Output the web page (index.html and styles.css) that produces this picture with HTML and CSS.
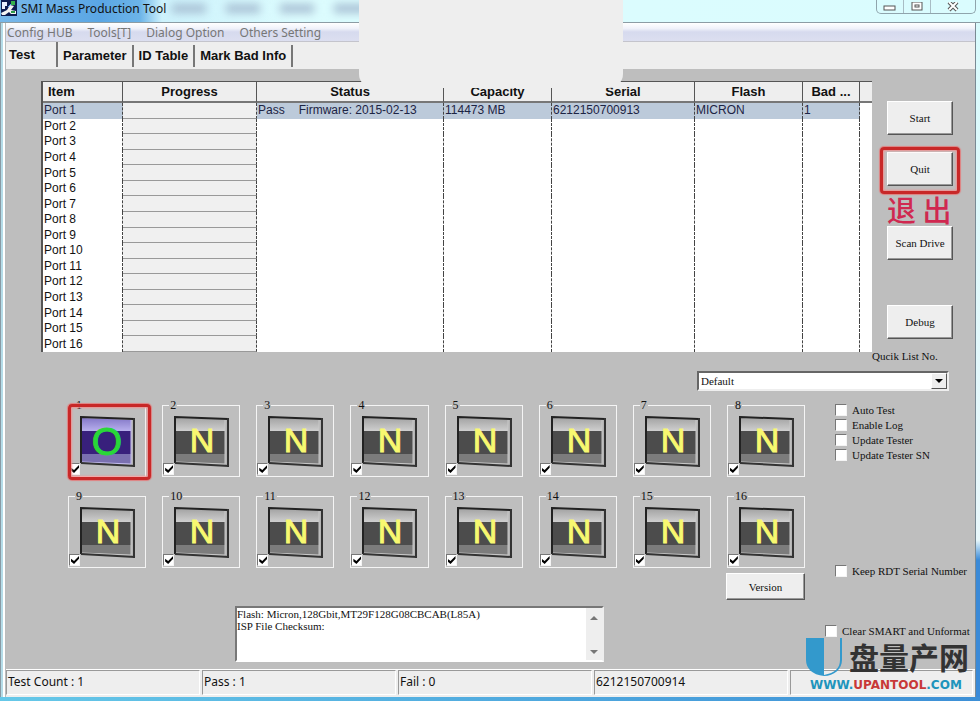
FILE: index.html
```html
<!DOCTYPE html>
<html lang="en">
<head>
  <meta charset="UTF-8">
  <title>SMI Mass Production Tool</title>
  <link rel="stylesheet" href="styles.css">
</head>
<body>

  <!-- shared drawings -->
  <svg class="defs" width="0" height="0" aria-hidden="true">
    <defs>
      <linearGradient id="shine" x1="0" y1="0" x2="0" y2="1">
        <stop offset="0" stop-color="#a4a4a4"/>
        <stop offset="1" stop-color="#d2d2d2"/>
      </linearGradient>
      <linearGradient id="shine-on" x1="0" y1="0" x2="0" y2="1">
        <stop offset="0" stop-color="#8478c8"/>
        <stop offset="1" stop-color="#bcb4f0"/>
      </linearGradient>
      <symbol id="chip" viewBox="0 0 56 52">
        <path d="M1 1 L55 3 L55 50 L1 47 Z" fill="#b4b4b4"/>
        <path d="M2 2 L51 4 L51 16 L2 16 Z" fill="url(#shine)"/>
        <path d="M2 15 H51 V38 H2 Z" fill="#4c4c4c"/>
        <path d="M2 38 H51 V48 L2 46 Z" fill="#7c7c7c"/>
        <path d="M51 4 V48 L2 46" fill="none" stroke="#c8c8c8"/>
        <path d="M1 47 V1 L54 3" fill="none" stroke="#222" stroke-width="2"/>
        <path d="M54 2 V51" stroke="#333" stroke-width="2"/>
        <path d="M1 47 L55 50" stroke="#333" stroke-width="2"/>
      </symbol>
      <symbol id="chip-on" viewBox="0 0 56 52">
        <path d="M1 1 L55 3 L55 50 L1 47 Z" fill="#b4b4b4"/>
        <path d="M2 2 L51 4 L51 16 L2 16 Z" fill="url(#shine-on)"/>
        <path d="M2 15 H51 V38 H2 Z" fill="#38207c"/>
        <path d="M2 38 H51 V48 L2 46 Z" fill="#7a70b0"/>
        <path d="M51 4 V48 L2 46" fill="none" stroke="#c4bcf0"/>
        <path d="M1 47 V1 L54 3" fill="none" stroke="#222" stroke-width="2"/>
        <path d="M54 2 V51" stroke="#333" stroke-width="2"/>
        <path d="M1 47 L55 50" stroke="#333" stroke-width="2"/>
      </symbol>
    </defs>
  </svg>

  <div class="window">
    <header class="titlebar">
      <svg class="app-icon" width="16" height="16" viewBox="0 0 16 16">
        <rect width="16" height="16" fill="#0c1c50"/>
        <path d="M1 2h5v4H4v3H1z" fill="#e8f0ff"/>
        <path d="M10 1h4v4h-4z" fill="#35b04c"/>
        <path d="M0 13l6-3 3-5 4 1-3 4 5 1v3h-5l-2-2-4 3H1z" fill="#f4f4f4"/>
        <path d="M10 11h4v2h-4z" fill="#2f9a48"/>
        <path d="M7 7l3-3" stroke="#59a4ff" stroke-width="1"/>
      </svg>
      <h1>SMI Mass Production Tool</h1>
      <div class="ghosts"><i></i><i></i><i></i><i></i></div>
      <div class="win-buttons">
        <button type="button" aria-label="Minimize">
          <svg width="14" height="10" viewBox="0 0 14 10"><rect x="1" y="4" width="11" height="4" fill="#fff" stroke="#555"/></svg>
        </button>
        <button type="button" aria-label="Maximize">
          <svg width="12" height="10" viewBox="0 0 12 10"><rect x="1" y="0" width="10" height="8" fill="#fff" stroke="#555"/><rect x="4" y="3" width="4" height="2" fill="none" stroke="#555"/></svg>
        </button>
        <button type="button" aria-label="Close">
          <svg width="12" height="10" viewBox="0 0 12 10"><path d="M2 0L10 8M10 0L2 8" stroke="#555" stroke-width="4"/><path d="M2 0L10 8M10 0L2 8" stroke="#fff" stroke-width="2"/></svg>
        </button>
      </div>
    </header>

    <nav class="menubar">
      <a href="#">Config HUB</a>
      <a href="#">Tools[T]</a>
      <a href="#">Dialog Option</a>
      <a href="#">Others Setting</a>
    </nav>

    <div class="tabs">
      <button type="button" class="tab active">Test</button>
      <button type="button" class="tab">Parameter</button>
      <button type="button" class="tab">ID Table</button>
      <button type="button" class="tab">Mark Bad Info</button>
    </div>

    <main class="panel">
      <section class="top">
        <div class="list">
          <table>
            <colgroup>
              <col class="c-item"><col class="c-progress"><col class="c-status"><col class="c-capacity"><col class="c-serial"><col class="c-flash"><col class="c-bad"><col>
            </colgroup>
            <thead>
              <tr><th>Item</th><th>Progress</th><th>Status</th><th>Capacity</th><th>Serial</th><th>Flash</th><th>Bad ...</th><th></th></tr>
            </thead>
            <tbody>
              <tr class="selected"><td>Port 1</td><td></td><td><span class="pass">Pass</span>Firmware: 2015-02-13</td><td>114473 MB</td><td>6212150700913</td><td>MICRON</td><td>1</td><td></td></tr>
              <tr><td>Port 2</td><td></td><td></td><td></td><td></td><td></td><td></td><td></td></tr>
              <tr><td>Port 3</td><td></td><td></td><td></td><td></td><td></td><td></td><td></td></tr>
              <tr><td>Port 4</td><td></td><td></td><td></td><td></td><td></td><td></td><td></td></tr>
              <tr><td>Port 5</td><td></td><td></td><td></td><td></td><td></td><td></td><td></td></tr>
              <tr><td>Port 6</td><td></td><td></td><td></td><td></td><td></td><td></td><td></td></tr>
              <tr><td>Port 7</td><td></td><td></td><td></td><td></td><td></td><td></td><td></td></tr>
              <tr><td>Port 8</td><td></td><td></td><td></td><td></td><td></td><td></td><td></td></tr>
              <tr><td>Port 9</td><td></td><td></td><td></td><td></td><td></td><td></td><td></td></tr>
              <tr><td>Port 10</td><td></td><td></td><td></td><td></td><td></td><td></td><td></td></tr>
              <tr><td>Port 11</td><td></td><td></td><td></td><td></td><td></td><td></td><td></td></tr>
              <tr><td>Port 12</td><td></td><td></td><td></td><td></td><td></td><td></td><td></td></tr>
              <tr><td>Port 13</td><td></td><td></td><td></td><td></td><td></td><td></td><td></td></tr>
              <tr><td>Port 14</td><td></td><td></td><td></td><td></td><td></td><td></td><td></td></tr>
              <tr><td>Port 15</td><td></td><td></td><td></td><td></td><td></td><td></td><td></td></tr>
              <tr><td>Port 16</td><td></td><td></td><td></td><td></td><td></td><td></td><td></td></tr>
            </tbody>
          </table>
        </div>
        <div class="actions">
          <button type="button" class="btn start">Start</button>
          <div class="marked">
            <button type="button" class="btn">Quit</button>
            <span class="mark"></span>
          </div>
          <span class="note" lang="zh">退 出</span>
          <button type="button" class="btn scan">Scan Drive</button>
          <button type="button" class="btn">Debug</button>
          <label class="quick-label" for="quick">Qucik List No.</label>
        </div>
      </section>

      <div class="quick">
        <select id="quick"><option>Default</option></select>
        <span class="drop"></span>
      </div>

      <section class="bottom">
        <div class="left">
          <div class="slots">
            <fieldset class="slot marked"><legend>1</legend><input type="checkbox" aria-label="Port 1" checked><svg class="chip" viewBox="0 0 56 52"><use href="#chip-on"/><text class="letter ok" x="27" y="39">O</text></svg><span class="mark"></span></fieldset>
            <fieldset class="slot"><legend>2</legend><input type="checkbox" aria-label="Port 2" checked><svg class="chip" viewBox="0 0 56 52"><use href="#chip"/><text class="letter" x="28" y="36">N</text></svg></fieldset>
            <fieldset class="slot"><legend>3</legend><input type="checkbox" aria-label="Port 3" checked><svg class="chip" viewBox="0 0 56 52"><use href="#chip"/><text class="letter" x="28" y="36">N</text></svg></fieldset>
            <fieldset class="slot"><legend>4</legend><input type="checkbox" aria-label="Port 4" checked><svg class="chip" viewBox="0 0 56 52"><use href="#chip"/><text class="letter" x="28" y="36">N</text></svg></fieldset>
            <fieldset class="slot"><legend>5</legend><input type="checkbox" aria-label="Port 5" checked><svg class="chip" viewBox="0 0 56 52"><use href="#chip"/><text class="letter" x="28" y="36">N</text></svg></fieldset>
            <fieldset class="slot"><legend>6</legend><input type="checkbox" aria-label="Port 6" checked><svg class="chip" viewBox="0 0 56 52"><use href="#chip"/><text class="letter" x="28" y="36">N</text></svg></fieldset>
            <fieldset class="slot"><legend>7</legend><input type="checkbox" aria-label="Port 7" checked><svg class="chip" viewBox="0 0 56 52"><use href="#chip"/><text class="letter" x="28" y="36">N</text></svg></fieldset>
            <fieldset class="slot"><legend>8</legend><input type="checkbox" aria-label="Port 8" checked><svg class="chip" viewBox="0 0 56 52"><use href="#chip"/><text class="letter" x="28" y="36">N</text></svg></fieldset>
            <fieldset class="slot"><legend>9</legend><input type="checkbox" aria-label="Port 9" checked><svg class="chip" viewBox="0 0 56 52"><use href="#chip"/><text class="letter" x="28" y="36">N</text></svg></fieldset>
            <fieldset class="slot"><legend>10</legend><input type="checkbox" aria-label="Port 10" checked><svg class="chip" viewBox="0 0 56 52"><use href="#chip"/><text class="letter" x="28" y="36">N</text></svg></fieldset>
            <fieldset class="slot"><legend>11</legend><input type="checkbox" aria-label="Port 11" checked><svg class="chip" viewBox="0 0 56 52"><use href="#chip"/><text class="letter" x="28" y="36">N</text></svg></fieldset>
            <fieldset class="slot"><legend>12</legend><input type="checkbox" aria-label="Port 12" checked><svg class="chip" viewBox="0 0 56 52"><use href="#chip"/><text class="letter" x="28" y="36">N</text></svg></fieldset>
            <fieldset class="slot"><legend>13</legend><input type="checkbox" aria-label="Port 13" checked><svg class="chip" viewBox="0 0 56 52"><use href="#chip"/><text class="letter" x="28" y="36">N</text></svg></fieldset>
            <fieldset class="slot"><legend>14</legend><input type="checkbox" aria-label="Port 14" checked><svg class="chip" viewBox="0 0 56 52"><use href="#chip"/><text class="letter" x="28" y="36">N</text></svg></fieldset>
            <fieldset class="slot"><legend>15</legend><input type="checkbox" aria-label="Port 15" checked><svg class="chip" viewBox="0 0 56 52"><use href="#chip"/><text class="letter" x="28" y="36">N</text></svg></fieldset>
            <fieldset class="slot"><legend>16</legend><input type="checkbox" aria-label="Port 16" checked><svg class="chip" viewBox="0 0 56 52"><use href="#chip"/><text class="letter" x="28" y="36">N</text></svg></fieldset>
          </div>
          <button type="button" class="btn version">Version</button>
          <div class="log">
            <textarea readonly aria-label="Log">Flash: Micron,128Gbit,MT29F128G08CBCAB(L85A)
ISP File Checksum:</textarea>
            <div class="scroll">
              <svg width="8" height="4" viewBox="0 0 8 4"><path d="M0 4L4 0L8 4z" fill="#777"/></svg>
              <svg width="8" height="4" viewBox="0 0 8 4"><path d="M0 0L4 4L8 0z" fill="#777"/></svg>
            </div>
          </div>
        </div>

        <div class="options">
          <label><input type="checkbox">Auto Test</label>
          <label><input type="checkbox">Enable Log</label>
          <label><input type="checkbox">Update Tester</label>
          <label><input type="checkbox">Update Tester SN</label>
          <label class="keep"><input type="checkbox">Keep RDT Serial Number</label>
          <label class="clear"><input type="checkbox">Clear SMART and Unformat</label>
        </div>
      </section>
    </main>

    <footer class="status">
      <span>Test Count : 1</span>
      <span>Pass : 1</span>
      <span>Fail : 0</span>
      <span>6212150700914</span>
      <span></span>
    </footer>

    <div class="blank"></div>

    <div class="brand">
      <svg width="38" height="39" viewBox="0 0 38 39">
        <path d="M0 0H18V38C6 37 0 30 0 22Z" fill="#3399cc"/>
        <path d="M18 37C29 35 34 30 34 22V0H36V22C36 31 28 38 18 38Z" fill="#3399cc"/>
      </svg>
      <span class="brand-name" lang="zh">盘量产网</span>
      <span class="brand-url">WWW.<b>UPANTOOL</b>.COM</span>
    </div>
  </div>

</body>
</html>
```
FILE: styles.css
```css
* {
  box-sizing: border-box;
}

body {
  margin: 0;
  min-height: 100vh;
  display: flex;
  background: linear-gradient(to bottom, #d8fbfd 0, #e8f8fc 540px, #3a8ad8 560px, #3a8ad8 100%);
  font-family: "Liberation Serif", "Noto Sans CJK SC", serif;
  font-size: 11px;
  color: #111;
}

button,
select,
textarea {
  font: inherit;
  color: inherit;
}

.defs {
  position: absolute;
}

.window {
  position: relative;
  flex: 1;
  min-width: 0;
  display: flex;
  flex-direction: column;
  padding: 0 5px 6px 6px;
  background:
    linear-gradient(to right, #66c8e8, #3d8fd6) bottom / 100% 4px no-repeat,
    linear-gradient(to right, #8a9aa4 0 1px, #b4dce8 1px 3px, #fff 3px 5px, #bbb 5px) left / 6px 100% no-repeat,
    linear-gradient(to left, transparent 0 4px, #7a8a94 4px) right / 5px 100% no-repeat,
    linear-gradient(#eee, #eee) left / calc(100% - 5px) 100% no-repeat;
}

/* title bar */
.titlebar {
  display: flex;
  align-items: flex-start;
  height: 23px;
  margin: 0 -5px 0 -6px;
  border-bottom: 1px solid #8c9ca4;
  background: linear-gradient(to right, #78b8ea 0, #5aa6e4 100px, #6cb4e8 140px, #cdf2fc 162px, #dcfcfe 300px, #dafcfe 100%);
}

.app-icon {
  margin: 0 4px 0 1px;
}

h1 {
  margin: 0;
  font: 12px/17px "Noto Sans", sans-serif;
}

.ghosts {
  flex: 1;
  display: flex;
  gap: 20px;
  padding: 4px 0 0 6px;
}

.ghosts i {
  width: 34px;
  height: 9px;
  background: #a8c0d4;
  filter: blur(4px);
}

.win-buttons {
  display: flex;
  height: 14px;
  margin-right: 4px;
  border: 1px solid #8fa4ac;
  border-top: 0;
  border-radius: 0 0 5px 5px;
}

.win-buttons button {
  width: 27px;
  padding: 0;
  border: 0;
  border-right: 1px solid #a8bcc4;
  background: none;
  line-height: 0;
}

.win-buttons button:last-child {
  width: 44px;
  border-right: 0;
}

/* menu and tabs */
.menubar {
  display: flex;
  gap: 15px;
  height: 19px;
  padding-left: 1px;
  border-bottom: 1px solid #c4c4cc;
  background: linear-gradient(#fff 0, #f0f2fa 30%, #d6daee 50%, #dcdff0 100%);
  font: 12px/19px "Noto Sans", sans-serif;
}

.menubar a {
  color: #777;
  text-decoration: none;
}

.tabs {
  display: flex;
  align-items: flex-start;
  height: 27px;
  background: #eee;
}

.tab {
  height: 22px;
  margin-top: 3px;
  padding: 0 5px;
  border: 0;
  border-right: 2px solid #777;
  background: none;
  font: bold 13px/20px "Liberation Sans", sans-serif;
}

.tab.active {
  width: 52px;
  margin-top: 0;
  padding: 0 3px;
  height: 25px;
  text-align: left;
}

/* main panel */
.panel {
  flex: 1;
  padding: 12px 0 6px 35px;
  background: #bebebe;
}

.top {
  display: flex;
  align-items: flex-start;
}

.list {
  flex: 1;
  min-width: 0;
  border: 1px solid #555;
  border-width: 1px 0 0 2px;
  background: #fff;
}

.list table {
  width: 100%;
  height: 270px;
  table-layout: fixed;
  border-collapse: separate;
  border-spacing: 0;
  font: 12px/15px "Liberation Sans", sans-serif;
}

.c-item { width: 80px; }
.c-progress { width: 134px; }
.c-status { width: 187px; }
.c-capacity { width: 108px; }
.c-serial { width: 143px; }
.c-flash { width: 108px; }
.c-bad { width: 57px; }

.list th {
  height: 21px;
  padding: 0;
  border-right: 1px solid #555;
  border-bottom: 2px solid #777;
  background: #eee;
  font-size: 13px;
}

.list th:first-child {
  padding-left: 5px;
  text-align: left;
}

.list th:last-child {
  border-right: 0;
}

.list td {
  padding: 0 1px;
  border-right: 1px dashed #444;
  white-space: nowrap;
  overflow: hidden;
}

.list td:last-child {
  border-right: 0;
}

.list td:nth-child(2) {
  border-bottom: 1px solid #999;
  background: #f0f0f0;
}

.selected td:not(:nth-child(2)):not(:last-child) {
  background: #bccada;
  color: #1c2444;
}

.pass {
  margin-right: 14px;
}

/* buttons on the right */
.actions {
  display: flex;
  flex-direction: column;
  align-items: flex-start;
  width: 103px;
  padding-top: 20px;
}

.btn {
  width: 66px;
  height: 34px;
  padding: 0;
  border: 1px solid;
  border-color: #fff #555 #555 #fff;
  background: #eee;
  box-shadow: inset -1px -1px #999;
}

.actions .btn,
.actions .marked {
  margin-left: 15px;
}

.actions .marked .btn {
  display: block;
  margin-left: 0;
}

.start {
  margin-bottom: 17px;
}

.scan {
  margin-bottom: 45px;
}

.note {
  height: 29px;
  margin: 9px 0 2px 15px;
  color: #d02850;
  font: 500 29px/29px "Noto Sans CJK SC", sans-serif;
}

.quick-label {
  margin-top: 11px;
  line-height: 13px;
}

.marked {
  position: relative;
}

.mark {
  position: absolute;
  inset: -5px -7px -8px;
  border: 3px solid #c82828;
  border-radius: 4px;
  box-shadow: inset 0 0 2px 1px #f09090, 0 0 1px 1px #e08080;
  pointer-events: none;
}

/* drop-down */
.quick {
  display: grid;
  width: 252px;
  height: 19px;
  margin: 8px 26px 0 auto;
}

.quick select,
.drop {
  grid-area: 1 / 1;
}

.quick select {
  appearance: none;
  padding: 0 2px;
  border: 2px solid;
  border-color: #666 #eee #eee #666;
  border-radius: 0;
  background: #fff;
}

.drop {
  justify-self: end;
  width: 16px;
  margin: 2px;
  border: 1px solid;
  border-color: #fff #555 #555 #fff;
  background: #eee;
  pointer-events: none;
}

.drop::before {
  content: "";
  display: block;
  margin: 5px 3px;
  border: 4px solid transparent;
  border-top-color: #000;
  border-bottom: 0;
}

/* slots */
.bottom {
  display: flex;
  gap: 30px;
  margin: 8px 0 0 27px;
}

.left {
  flex: 1;
  min-width: 0;
}

.slots {
  display: grid;
  grid-template-columns: repeat(8, 1fr);
  gap: 12px 16px;
}

.slot {
  display: flex;
  min-width: 0;
  height: 79px;
  margin: 0;
  padding: 0 0 1px;
  border: 1px solid #f4f4f4;
}

.slot legend {
  height: 14px;
  margin-left: 6px;
  padding: 0 1px;
  font-size: 12px;
  line-height: 14px;
}

.slot .mark {
  inset: -8px -6px -4px -1px;
}

.chip {
  width: 56px;
  height: 52px;
  margin-top: 4px;
}

.letter {
  fill: #f8f870;
  stroke: #f8f870;
  stroke-width: 1;
  font: 34px "Liberation Sans", sans-serif;
  text-anchor: middle;
}

.letter.ok {
  fill: #28d838;
  stroke: #28d838;
  font-size: 39px;
}

input[type="checkbox"] {
  appearance: none;
  flex: none;
  width: 11px;
  height: 12px;
  margin: 0;
  border: 1px solid;
  border-color: #777 #f4f4f4 #f4f4f4 #777;
  background: #fff;
}

.slot input[type="checkbox"] {
  align-self: flex-end;
}

input[type="checkbox"]:checked::before {
  content: "";
  display: block;
  width: 8px;
  height: 8px;
  margin: 1px;
  background: #000;
  clip-path: polygon(0 35%, 38% 62%, 100% 0, 100% 35%, 38% 100%, 0 70%);
}

.version {
  display: block;
  width: 79px;
  height: 27px;
  margin: 5px 0 6px auto;
}

.log {
  display: flex;
  width: 50%;
  height: 56px;
  margin-left: 167px;
  border: 2px solid;
  border-color: #777 #eee #fff #777;
  background: #fff;
}

.log textarea {
  flex: 1;
  min-width: 0;
  padding: 0;
  border: 0;
  outline: 0;
  resize: none;
  overflow: hidden;
  background: none;
  line-height: 12px;
  white-space: pre;
}

.scroll {
  display: flex;
  flex-direction: column;
  justify-content: space-between;
  align-items: center;
  width: 16px;
  padding: 8px 0 6px;
  background: #eee;
}

/* options */
.options {
  display: flex;
  flex-direction: column;
  width: 140px;
  padding-top: 4px;
}

.options label {
  display: flex;
  align-items: center;
  gap: 5px;
  height: 15px;
  white-space: nowrap;
}

.options input[type="checkbox"] {
  width: 12px;
}

.options .keep {
  margin-top: 101px;
}

.options .clear {
  margin: 45px 0 0 -10px;
}

/* status bar */
.status {
  display: grid;
  grid-template-columns: repeat(4, 1fr) 185px;
  height: 26px;
  border-top: 1px solid #fff;
  background: #eee;
  font: 12px/22px "Noto Sans", sans-serif;
}

.status span {
  margin-right: 2px;
  padding-left: 1px;
  border: 1px solid;
  border-color: #999 #fff #fff #999;
}

.blank {
  position: absolute;
  top: 0;
  left: 359px;
  width: 264px;
  height: 88px;
  border-radius: 0 0 14px 14px;
  background: #eee;
}

/* site logo over the corner */
.brand {
  position: absolute;
  right: 11px;
  bottom: 8px;
  display: grid;
  grid-template-columns: 38px auto;
  column-gap: 5px;
}

.brand-name {
  color: #333;
  font: bold 30px/36px "Noto Sans CJK SC", sans-serif;
}

.brand-url {
  grid-column: 1 / -1;
  padding-left: 4px;
  color: #2094bc;
  font: bold 12px/16px "DejaVu Sans", sans-serif;
}

.brand-url b {
  color: #c83838;
}
```
